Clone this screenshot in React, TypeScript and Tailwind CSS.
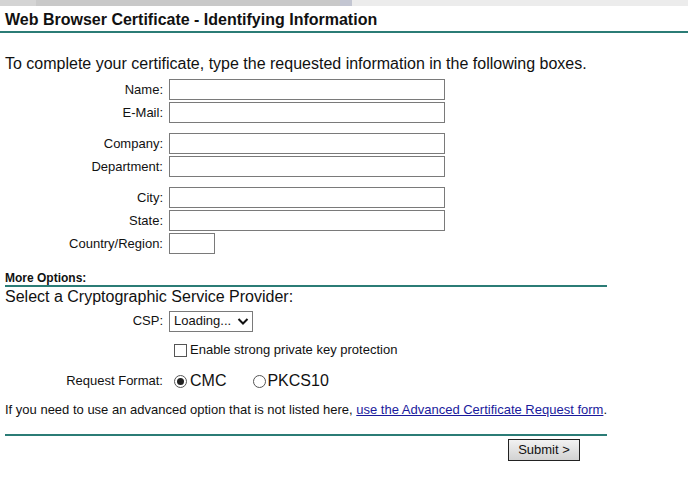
import React from "react";

const FONT = { fontFamily: '"Liberation Sans", Arial, sans-serif' };

function Field({ label, width = "w-[276px]" }: { label: string; width?: string }) {
  return (
    <>
      <div className="flex h-[23px] items-center justify-end pr-[1px] text-[13px] text-[#111]">{label}</div>
      <div className="flex h-[23px] items-center">
        <div className={`h-[21px] ${width} border border-[#7a7a7a] bg-white`} />
      </div>
    </>
  );
}

function Spacer() {
  return <div className="col-span-2 h-[8px]" />;
}

function Radio({ checked }: { checked?: boolean }) {
  return (
    <span className="flex h-[13px] w-[13px] items-center justify-center rounded-full border border-[#555] bg-white">
      {checked && <span className="h-[7px] w-[7px] rounded-full bg-[#222]" />}
    </span>
  );
}

export default function App() {
  return (
    <div className="min-h-screen w-[688px] bg-white text-black" style={FONT}>
      {/* browser chrome remnant */}
      <div className="flex h-[6px] overflow-hidden">
        <div className="w-[36px] bg-[#d4d4d4]" />
        <div className="w-[304px] bg-[#c9c9c9]" />
        <div className="w-[12px] bg-[#c3c6d2]" />
        <div className="flex-1 bg-[#ececec]" />
      </div>

      <div className="border-b-2 border-[#2b7c76] px-[5px] pb-[2px] pt-[4px]">
        <h1 className="text-[16px] font-bold leading-[19px] text-[#111]">
          Web Browser Certificate - Identifying Information
        </h1>
      </div>

      <div className="px-[5px]">
        <p className="mt-[21px] text-[16px] leading-[19px] text-[#111]">
          To complete your certificate, type the requested information in the following boxes.
        </p>

        <div className="mt-[5px] grid grid-cols-[159px_1fr] gap-x-[5px]">
          <Field label="Name:" />
          <Field label="E-Mail:" />
          <Spacer />
          <Field label="Company:" />
          <Field label="Department:" />
          <Spacer />
          <Field label="City:" />
          <Field label="State:" />
          <Field label="Country/Region:" width="w-[46px]" />
        </div>

        <div className="mt-[16px] w-[602px] border-b-2 border-[#2b7c76]">
          <div className="text-[12px] font-bold leading-[14px] text-[#111]">More Options:</div>
        </div>

        <p className="text-[16px] leading-[19px] text-[#111]">Select a Cryptographic Service Provider:</p>

        <div className="mt-[4px] grid grid-cols-[159px_1fr] gap-x-[5px]">
          <div className="flex h-[22px] items-center justify-end pr-[1px] text-[13px] text-[#111]">CSP:</div>
          <div className="flex h-[22px] items-center">
            <div className="flex h-[21px] w-[84px] items-center justify-between border border-[#7a7a7a] bg-white pl-[4px] pr-[3px] text-[13px] text-[#111]">
              <span>Loading...</span>
              <svg width="12" height="9" viewBox="0 0 12 9" fill="none">
                <path d="M1.5 2 L6 6.5 L10.5 2" stroke="#111" strokeWidth="2" />
              </svg>
            </div>
          </div>

          <div className="h-[10px]" />
          <div className="h-[10px]" />

          <div />
          <div className="flex h-[16px] items-center gap-[3px] pl-[5px] text-[13px] text-[#111]">
            <span className="h-[13px] w-[13px] border border-[#555] bg-white" />
            <span>Enable strong private key protection</span>
          </div>

          <div className="h-[13px]" />
          <div className="h-[13px]" />

          <div className="flex h-[20px] items-center justify-end pr-[1px] text-[13px] text-[#111]">Request Format:</div>
          <div className="flex h-[20px] items-center pl-[5px] text-[16px] text-[#111]">
            <Radio checked />
            <span className="ml-[3px]">CMC</span>
            <span className="ml-[27px]">
              <Radio />
            </span>
            <span className="ml-[1px]">PKCS10</span>
          </div>
        </div>

        <p className="mt-[11px] text-[13px] leading-[16px] text-[#111]">
          If you need to use an advanced option that is not listed here,{" "}
          <a href="#" className="text-[#1a1a9c] underline">
            use the Advanced Certificate Request form
          </a>
          .
        </p>

        <div className="mt-[16px] w-[602px] border-b-2 border-[#2b7c76]" />

        <div className="flex w-[575px] justify-end pt-[3px]">
          <button className="h-[22px] w-[72px] border border-[#222] bg-gradient-to-b from-[#f2f2f2] to-[#d2d2d2] text-[13px] text-[#111]">
            Submit &gt;
          </button>
        </div>
      </div>
    </div>
  );
}
